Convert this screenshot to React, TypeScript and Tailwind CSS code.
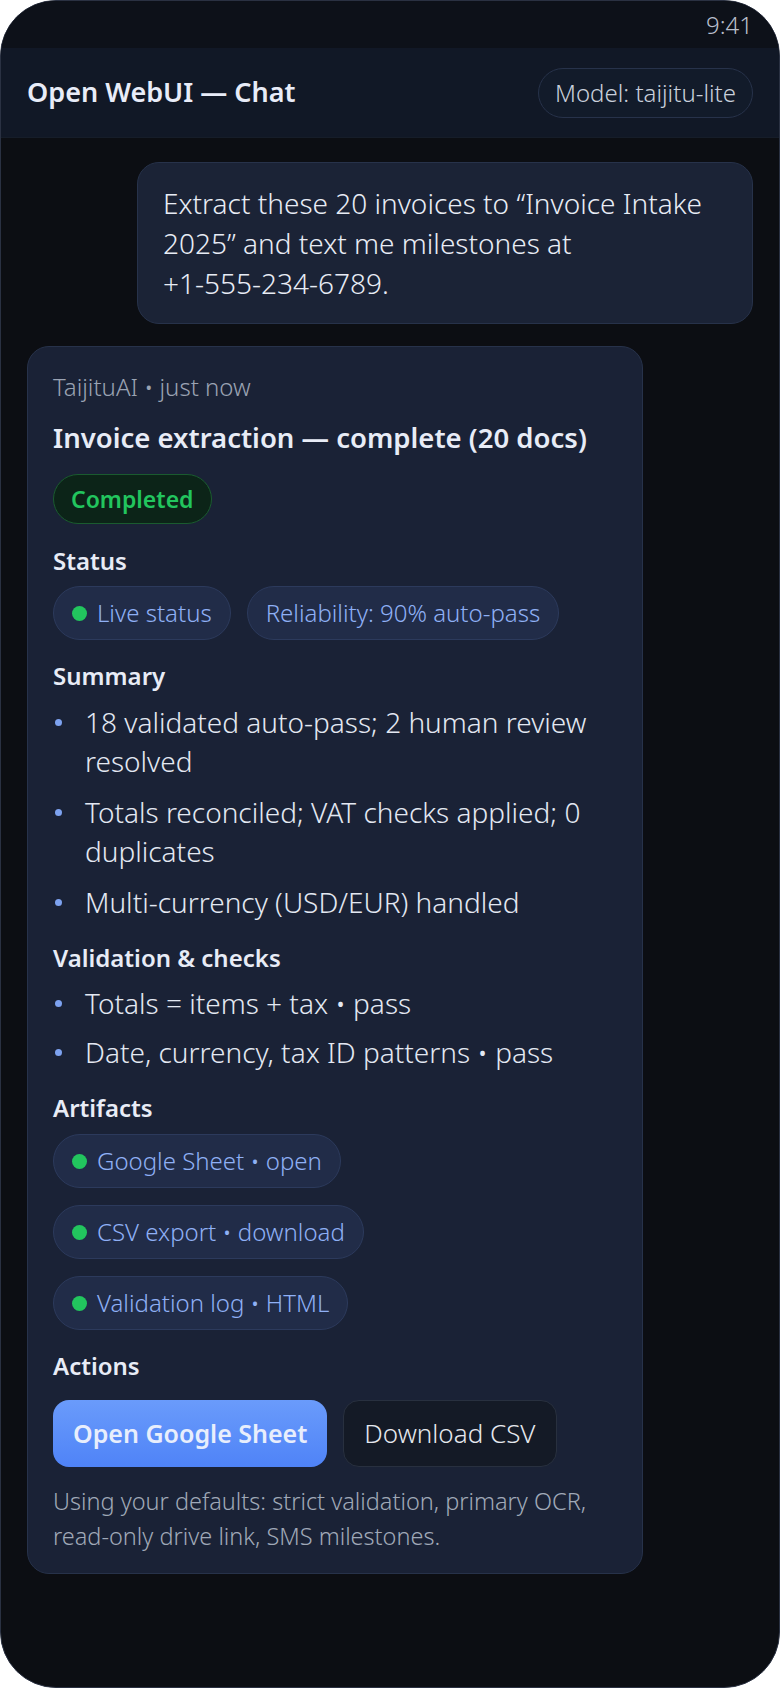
const font = { fontFamily: '"Noto Sans", "Open Sans", sans-serif' };

function Dot() {
  return <span className="h-[15px] w-[15px] shrink-0 rounded-full bg-[#22c55e]" />;
}

function Pill({ label, dot }: { label: string; dot?: boolean }) {
  return (
    <span className="inline-flex h-[54px] items-center gap-[10px] rounded-full border border-[#2c3a5c] bg-[#212c48] px-[18px] text-[24px] font-light text-[#8fb0f5]">
      {dot && <Dot />}
      {label}
    </span>
  );
}

function Heading({ children, className = "" }: { children: string; className?: string }) {
  return <h3 className={`text-[24px] leading-[32px] font-semibold text-[#e8ecf6] ${className}`}>{children}</h3>;
}

function Bullets({ items, tight }: { items: string[]; tight?: boolean }) {
  return (
    <ul className={tight ? "mt-[10px] flex flex-col gap-[10px]" : "mt-[11px] flex flex-col gap-[12px]"}>
      {items.map((t) => (
        <li key={t} className="flex text-[28px] leading-[39px] font-light text-[#e3e8f2]">
          <span className="flex h-[39px] w-[32px] shrink-0 items-center pl-[2px]">
            <span className="h-[7px] w-[7px] rounded-full bg-[#7da2f0]" />
          </span>
          <span>{t}</span>
        </li>
      ))}
    </ul>
  );
}

export default function App() {
  return (
    <div className="min-h-[1688px] w-[780px] bg-white" style={font}>
      <div className="flex h-[1688px] flex-col overflow-hidden rounded-[56px] border border-[#2a3142] bg-[#0c0e13]">
        <div className="flex h-[47px] shrink-0 items-center justify-end bg-[#0d1119] pr-[26px] text-[24px] font-light text-[#b8bfcc]">
          9:41
        </div>
        <header className="flex h-[90px] shrink-0 items-center justify-between border-b border-[#161d29] bg-[#111826] px-[26px]">
          <h1 className="text-[27px] font-semibold text-[#e8ecf8]">Open WebUI — Chat</h1>
          <span className="flex h-[50px] items-center rounded-full border border-[#27324a] bg-[#121b2a] px-[16px] text-[24px] font-light text-[#c9d0dc]">
            Model: taijitu-lite
          </span>
        </header>

        <main className="flex flex-col px-[26px] pt-[24px]">
          <div className="ml-[110px] rounded-[22px] border border-[#27324a] bg-[#1b2336] px-[25px] py-[20px] text-[28px] leading-[40px] font-light text-[#e8ecf5]">
            Extract these 20 invoices to “Invoice Intake 2025” and text me milestones at{" "}
            <span className="whitespace-nowrap">+1-555-234-6789.</span>
          </div>

          <div className="mt-[22px] mr-[110px] flex flex-col items-start rounded-[22px] border border-[#27324a] bg-[#1a2236] px-[25px] pt-[24px] pb-[19px]">
            <div className="text-[24px] leading-[32px] font-light text-[#9aa3b3]">TaijituAI • just now</div>
            <h2 className="mt-[17px] text-[27.5px] leading-[36px] font-semibold text-[#e8ecf6]">
              Invoice extraction — complete (20 docs)
            </h2>
            <span className="mt-[18px] flex h-[50px] items-center rounded-full border border-[#1a5b2f] bg-[#0c2418] px-[17px] text-[23px] font-semibold text-[#22c55e]">
              Completed
            </span>

            <Heading className="mt-[21px]">Status</Heading>
            <div className="mt-[9px] flex gap-[16px]">
              <Pill dot label="Live status" />
              <Pill label="Reliability: 90% auto-pass" />
            </div>

            <Heading className="mt-[20px]">Summary</Heading>
            <Bullets
              items={[
                "18 validated auto-pass; 2 human review resolved",
                "Totals reconciled; VAT checks applied; 0 duplicates",
                "Multi-currency (USD/EUR) handled",
              ]}
            />

            <Heading className="mt-[20px]">Validation &amp; checks</Heading>
            <Bullets tight items={["Totals = items + tax • pass", "Date, currency, tax ID patterns • pass"]} />

            <Heading className="mt-[20px]">Artifacts</Heading>
            <div className="mt-[10px] flex flex-col items-start gap-[17px]">
              <Pill dot label="Google Sheet • open" />
              <Pill dot label="CSV export • download" />
              <Pill dot label="Validation log • HTML" />
            </div>

            <Heading className="mt-[20px]">Actions</Heading>
            <div className="mt-[18px] flex gap-[16px]">
              <button className="h-[67px] rounded-[16px] bg-gradient-to-b from-[#6a9bfb] to-[#4f83f7] px-[20px] text-[25px] font-semibold text-[#e8eefc]">
                Open Google Sheet
              </button>
              <button className="h-[67px] rounded-[16px] border border-[#28303f] bg-[#141a26] px-[20px] text-[26px] font-light text-[#e5e8ee]">
                Download CSV
              </button>
            </div>

            <p className="mt-[17px] text-[23.5px] leading-[35px] font-light text-[#a0a9b8]">
              Using your defaults: strict validation, primary OCR, read-only drive link, SMS milestones.
            </p>
          </div>
        </main>
      </div>
    </div>
  );
}
